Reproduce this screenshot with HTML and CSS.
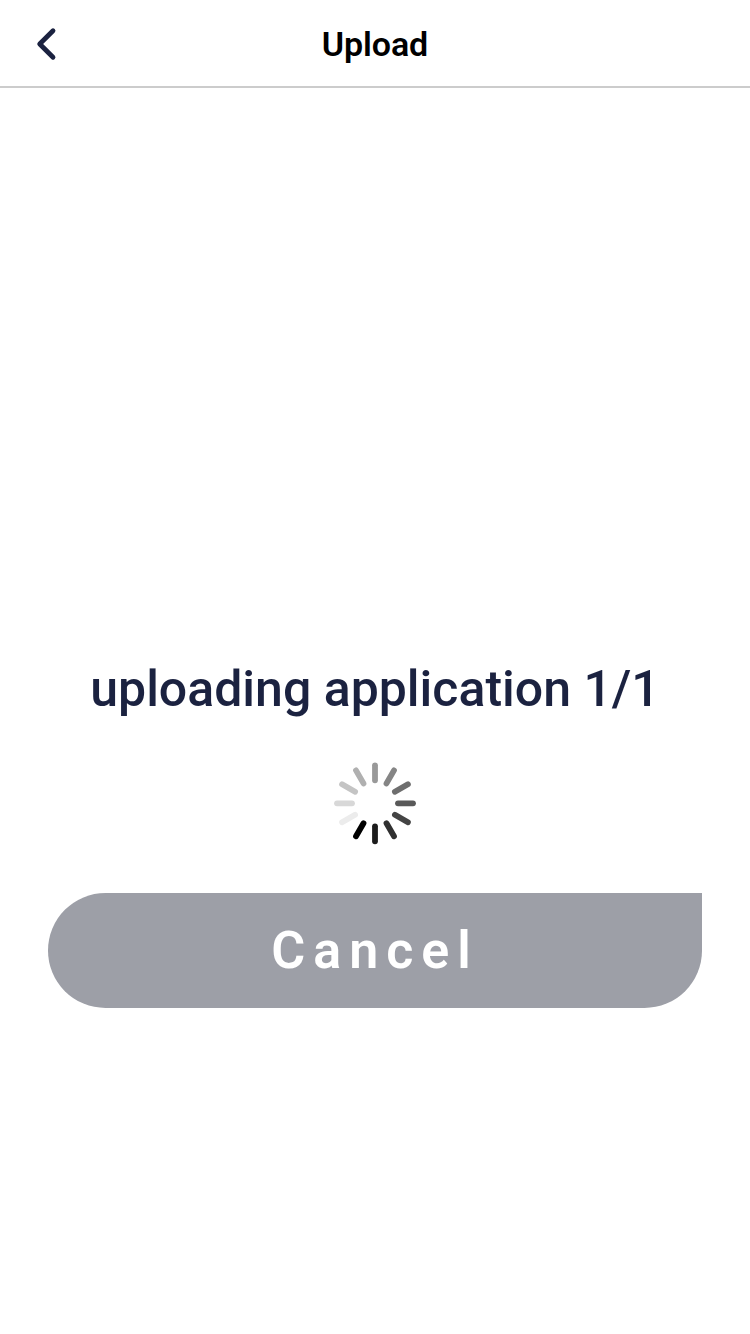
FILE: index.html
```html
<!DOCTYPE html>
<html lang="en">
<head>
<meta charset="utf-8">
<title>Upload</title>
<link rel="stylesheet" href="styles.css">
</head>
<body>
<header class="header">
  <button class="back" aria-label="Back">
    <svg width="24" height="36" viewBox="0 0 24 36"><path d="M19 4.700 5.700 18 19 31.300" fill="none" stroke="#1b2240" stroke-width="4.800" stroke-linecap="round" stroke-linejoin="round"/></svg>
  </button>
  <h1 class="title">Upload</h1>
</header>
<main class="content">
  <p class="status">uploading application 1/1</p>
  <svg class="spinner" viewBox="-41 -41.300 82 82" fill="none" stroke-width="5.800" stroke-linecap="round">
    <path d="M0-38V-23" stroke="#999"/>
    <path d="M0-38V-23" stroke="#858585" transform="rotate(30)"/>
    <path d="M0-38V-23" stroke="#6e6e6e" transform="rotate(60)"/>
    <path d="M0-38V-23" stroke="#595959" transform="rotate(90)"/>
    <path d="M0-38V-23" stroke="#444" transform="rotate(120)"/>
    <path d="M0-38V-23" stroke="#303030" transform="rotate(150)"/>
    <path d="M0-38V-23" stroke="#1c1c1c" transform="rotate(180)"/>
    <path d="M0-38V-23" stroke="#000" transform="rotate(210)"/>
    <path d="M0-38V-23" stroke="#ececec" transform="rotate(240)"/>
    <path d="M0-38V-23" stroke="#d8d8d8" transform="rotate(270)"/>
    <path d="M0-38V-23" stroke="#c4c4c4" transform="rotate(300)"/>
    <path d="M0-38V-23" stroke="#b0b0b0" transform="rotate(330)"/>
  </svg>
  <button class="cancel">Cancel</button>
</main>
</body>
</html>
```
FILE: styles.css
```css
* { box-sizing: border-box; }
body { margin: 0; min-height: 1334px; background: #fff; font-family: Roboto, sans-serif; }
.header { display: grid; grid-template-columns: 94px 1fr 94px; align-items: center; height: 88px; border-bottom: 2px solid #ccc; }
.back { display: flex; padding: 2px 0 0 34px; border: 0; background: none; }
.title { margin: 2px 0 0; text-align: center; font-size: 34px; line-height: 40px; font-weight: 600; letter-spacing: -0.1px; color: #000; }
.content { display: flex; flex-direction: column; align-items: center; padding: 571px 48px 0; }
.status { margin: 0; font-size: 50px; line-height: 60px; font-weight: 500; color: #1b2240; white-space: nowrap; }
.spinner { width: 82px; height: 82px; margin-top: 43px; overflow: visible; }
.cancel { width: 654px; height: 115px; margin-top: 49px; padding: 1px 0 0; border: 0; border-radius: 58px 0 58px 58px; background: #9d9fa7; color: #fff; font: 600 52px/60px Roboto, sans-serif; letter-spacing: 8px; }
```
